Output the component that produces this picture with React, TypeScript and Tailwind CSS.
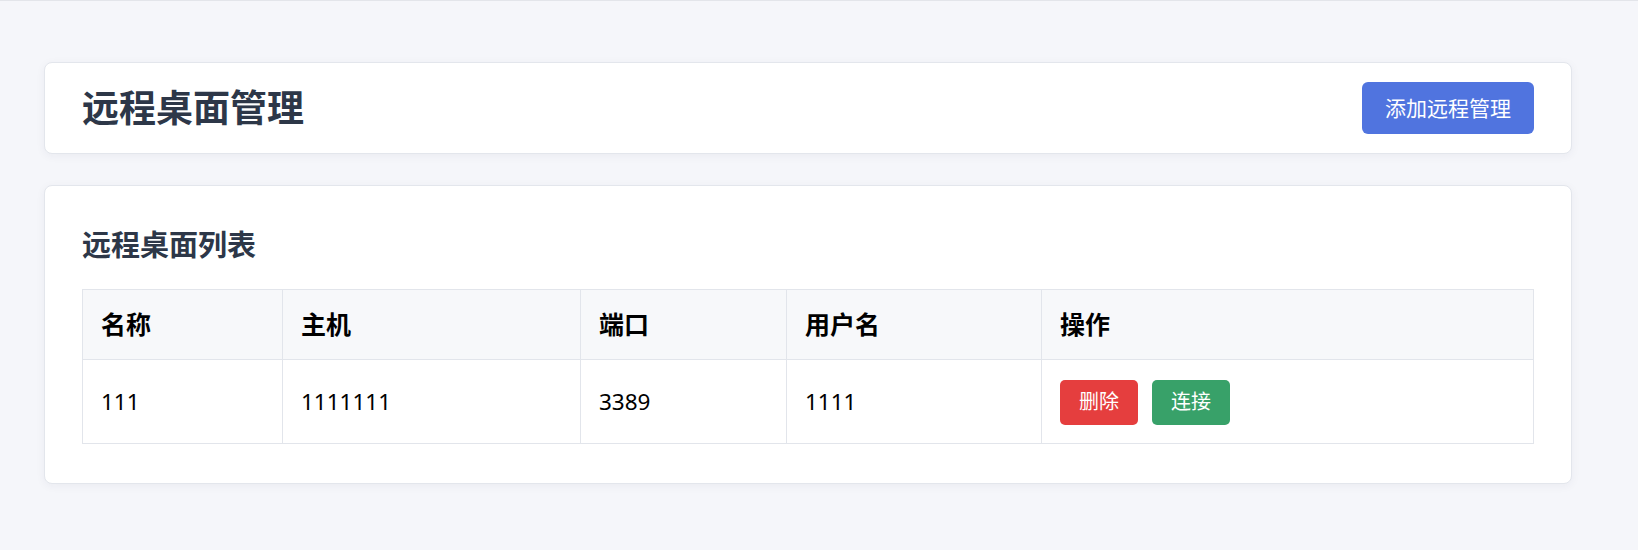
const connections = [
  { id: 1, name: "111", host: "1111111", port: "3389", username: "1111" },
];

const App = () => {
  return (
    <div className="min-h-[550px] bg-[#f5f6fa] border-t border-[#e3e5ea] pt-[61px] pl-[44px] pr-[66px] pb-10 font-['Noto_Sans','Noto_Sans_CJK_SC',sans-serif]">
      <div className="bg-white border border-[#e3e6ec] rounded-lg shadow-[0_2px_10px_rgba(30,40,80,0.05)] px-[37px] py-[19px] flex items-center justify-between">
        <h1 className="text-[37px] leading-[40px] font-bold text-[#2d3748]">远程桌面管理</h1>
        <button className="h-[52px] w-[172px] rounded-md bg-[#5074df] text-white text-[21px] leading-none">
          添加远程管理
        </button>
      </div>

      <div className="mt-[31px] bg-white border border-[#e3e6ec] rounded-lg shadow-[0_2px_10px_rgba(30,40,80,0.05)] px-[37px] pt-[37px] pb-[39px]">
        <h2 className="text-[29px] leading-[43px] font-bold text-[#2d3748] mb-[23px]">远程桌面列表</h2>
        <table className="w-full table-fixed border-collapse border border-[#e2e5eb]">
          <colgroup>
            <col className="w-[200px]" />
            <col className="w-[298px]" />
            <col className="w-[206px]" />
            <col className="w-[255px]" />
            <col />
          </colgroup>
          <thead>
            <tr className="bg-[#f7f8fa]">
              {["名称", "主机", "端口", "用户名", "操作"].map((h) => (
                <th
                  key={h}
                  className="border border-[#e2e5eb] px-[18px] py-[18px] text-left text-[25px] leading-[33px] font-bold text-black"
                >
                  {h}
                </th>
              ))}
            </tr>
          </thead>
          <tbody>
            {connections.map((c) => (
              <tr key={c.id}>
                <td className="border border-[#e2e5eb] px-[18px] pt-[19px] pb-[18px] text-[22.5px] leading-[46px] text-black">{c.name}</td>
                <td className="border border-[#e2e5eb] px-[18px] pt-[19px] pb-[18px] text-[22.5px] leading-[46px] text-black">{c.host}</td>
                <td className="border border-[#e2e5eb] px-[18px] pt-[19px] pb-[18px] text-[22.5px] leading-[46px] text-black">{c.port}</td>
                <td className="border border-[#e2e5eb] px-[18px] pt-[19px] pb-[18px] text-[22.5px] leading-[46px] text-black">{c.username}</td>
                <td className="border border-[#e2e5eb] px-[18px] pt-[19px] pb-[18px]">
                  <div className="flex items-center gap-[14px] h-[46px]">
                    <button className="h-[45px] w-[78px] rounded-[5px] bg-[#e53e3e] text-white text-[20px] leading-none">
                      删除
                    </button>
                    <button className="h-[45px] w-[78px] rounded-[5px] bg-[#38a169] text-white text-[20px] leading-none">
                      连接
                    </button>
                  </div>
                </td>
              </tr>
            ))}
          </tbody>
        </table>
      </div>
    </div>
  );
};

export default App;
